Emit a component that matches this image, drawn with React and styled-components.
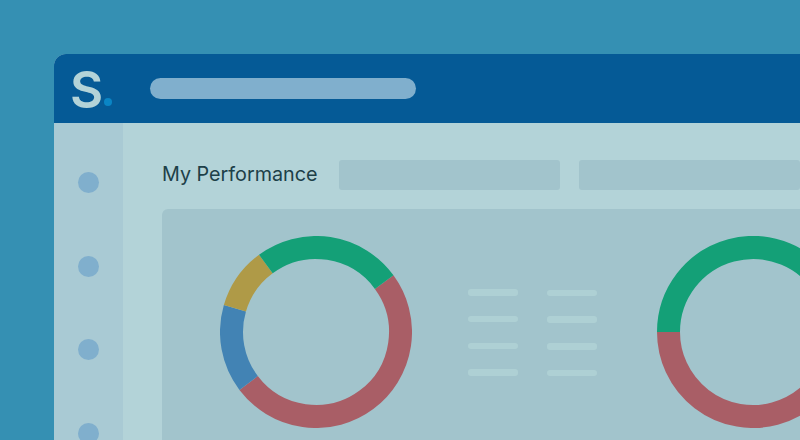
import React from 'react';
import styled, { createGlobalStyle } from 'styled-components';

const GlobalStyle = createGlobalStyle`
  html, body {
    margin: 0;
    width: 800px;
    height: 440px;
    overflow: hidden;
    background: #3590b3;
  }
`;

const Page = styled.div`
  width: 800px;
  height: 440px;
  padding: 54px 0 0 54px;
  box-sizing: border-box;
  overflow: hidden;
`;

const Window = styled.div`
  width: 760px;
  height: 400px;
  border-radius: 12px 0 0 0;
  overflow: hidden;
  background: #b3d3d8;
`;

const Header = styled.header`
  display: flex;
  align-items: center;
  height: 68.5px;
  background: #055a96;
`;

const Logo = styled.div`
  display: flex;
  align-items: flex-end;
  width: 96px;
  height: 68px;
  padding: 0 0 3px 16px;
  box-sizing: border-box;
`;

const LogoLetter = styled.span`
  font-family: Inter, "Liberation Sans", sans-serif;
  font-size: 51px;
  font-weight: 600;
  line-height: 58px;
  color: #b3d3d8;
`;

const LogoDot = styled.span`
  width: 8px;
  height: 8px;
  margin: 0 0 13px 1px;
  border-radius: 50%;
  background: #0a85c5;
`;

const SearchBar = styled.div`
  width: 266px;
  height: 21px;
  border-radius: 11px;
  background: #80afcd;
`;

const Body = styled.div`
  display: flex;
  height: 332px;
`;

const Sidebar = styled.aside`
  display: flex;
  flex-direction: column;
  align-items: center;
  gap: 62.5px;
  flex: 0 0 68.5px;
  padding-top: 49.5px;
  box-sizing: border-box;
  background: #a9cad4;
`;

const NavDot = styled.span`
  flex: none;
  width: 21px;
  height: 21px;
  border-radius: 50%;
  background: #80afcd;
`;

const Main = styled.main`
  flex: 1;
  padding: 37.5px 0 0 39.5px;
  min-width: 0;
`;

const TitleRow = styled.div`
  display: flex;
  align-items: center;
  height: 30px;
`;

const Title = styled.h1`
  flex: 0 0 177px;
  margin: 0 0 3px;
  font-family: Inter, "Liberation Sans", sans-serif;
  font-size: 19.75px;
  font-weight: 400;
  color: #1d4048;
`;

const Filter = styled.div`
  flex: 0 0 221px;
  height: 30px;
  margin-right: 19px;
  border-radius: 3px;
  background: #a2c4cc;
`;

const Card = styled.section`
  display: flex;
  align-items: flex-start;
  width: 700px;
  height: 300px;
  margin-top: 19px;
  padding: 27px 0 0 58px;
  box-sizing: border-box;
  border-radius: 6px;
  background: #a2c4cc;
`;

const Legend = styled.div`
  display: flex;
  flex: none;
  gap: 29px;
  margin: 53px 59.5px 0 56px;
`;

const LegendColumn = styled.div`
  display: flex;
  flex-direction: column;
  gap: 20.3px;
  padding-top: ${({ $offset }) => $offset}px;
`;

const LegendLine = styled.span`
  display: block;
  width: 50px;
  height: 6.5px;
  border-radius: 3px;
  background: #aed0d4;
`;

const ChartSvg = styled.svg`
  flex: none;
  display: block;
`;

const point = (deg, r) => {
  const a = ((deg - 90) * Math.PI) / 180;
  return [96 + r * Math.cos(a), 96 + r * Math.sin(a)];
};

const arcPath = (from, to) => {
  const r = 84.5;
  const [x1, y1] = point(from, r);
  const [x2, y2] = point(to, r);
  const large = to - from > 180 ? 1 : 0;
  return `M${x1} ${y1}A${r} ${r} 0 ${large} 1 ${x2} ${y2}`;
};

const Donut = ({ segments }) => (
  <ChartSvg width="192" height="192" viewBox="0 0 192 192">
    {segments.map((s) => (
      <path key={s.from} d={arcPath(s.from, s.to)} fill="none" stroke={s.color} strokeWidth="23" />
    ))}
  </ChartSvg>
);

const firstChart = [
  { from: 53.8, to: 232.9, color: '#a95e66' },
  { from: 232.9, to: 286.3, color: '#4283b4' },
  { from: 286.3, to: 323.6, color: '#af9a47' },
  { from: 323.6, to: 413.8, color: '#14a077' },
];

const secondChart = [
  { from: 60, to: 270, color: '#a95e66' },
  { from: 270, to: 420, color: '#14a077' },
];

const App = () => (
  <>
    <GlobalStyle />
    <Page>
      <Window>
        <Header>
          <Logo>
            <LogoLetter>S</LogoLetter>
            <LogoDot />
          </Logo>
          <SearchBar />
        </Header>
        <Body>
          <Sidebar>
            {[0, 1, 2, 3].map((i) => <NavDot key={i} />)}
          </Sidebar>
          <Main>
            <TitleRow>
              <Title>My Performance</Title>
              <Filter />
              <Filter />
            </TitleRow>
            <Card>
              <Donut segments={firstChart} />
              <Legend>
                {[0, 0.5].map((offset) => (
                  <LegendColumn key={offset} $offset={offset}>
                    {[0, 1, 2, 3].map((i) => <LegendLine key={i} />)}
                  </LegendColumn>
                ))}
              </Legend>
              <Donut segments={secondChart} />
            </Card>
          </Main>
        </Body>
      </Window>
    </Page>
  </>
);

export default App;
